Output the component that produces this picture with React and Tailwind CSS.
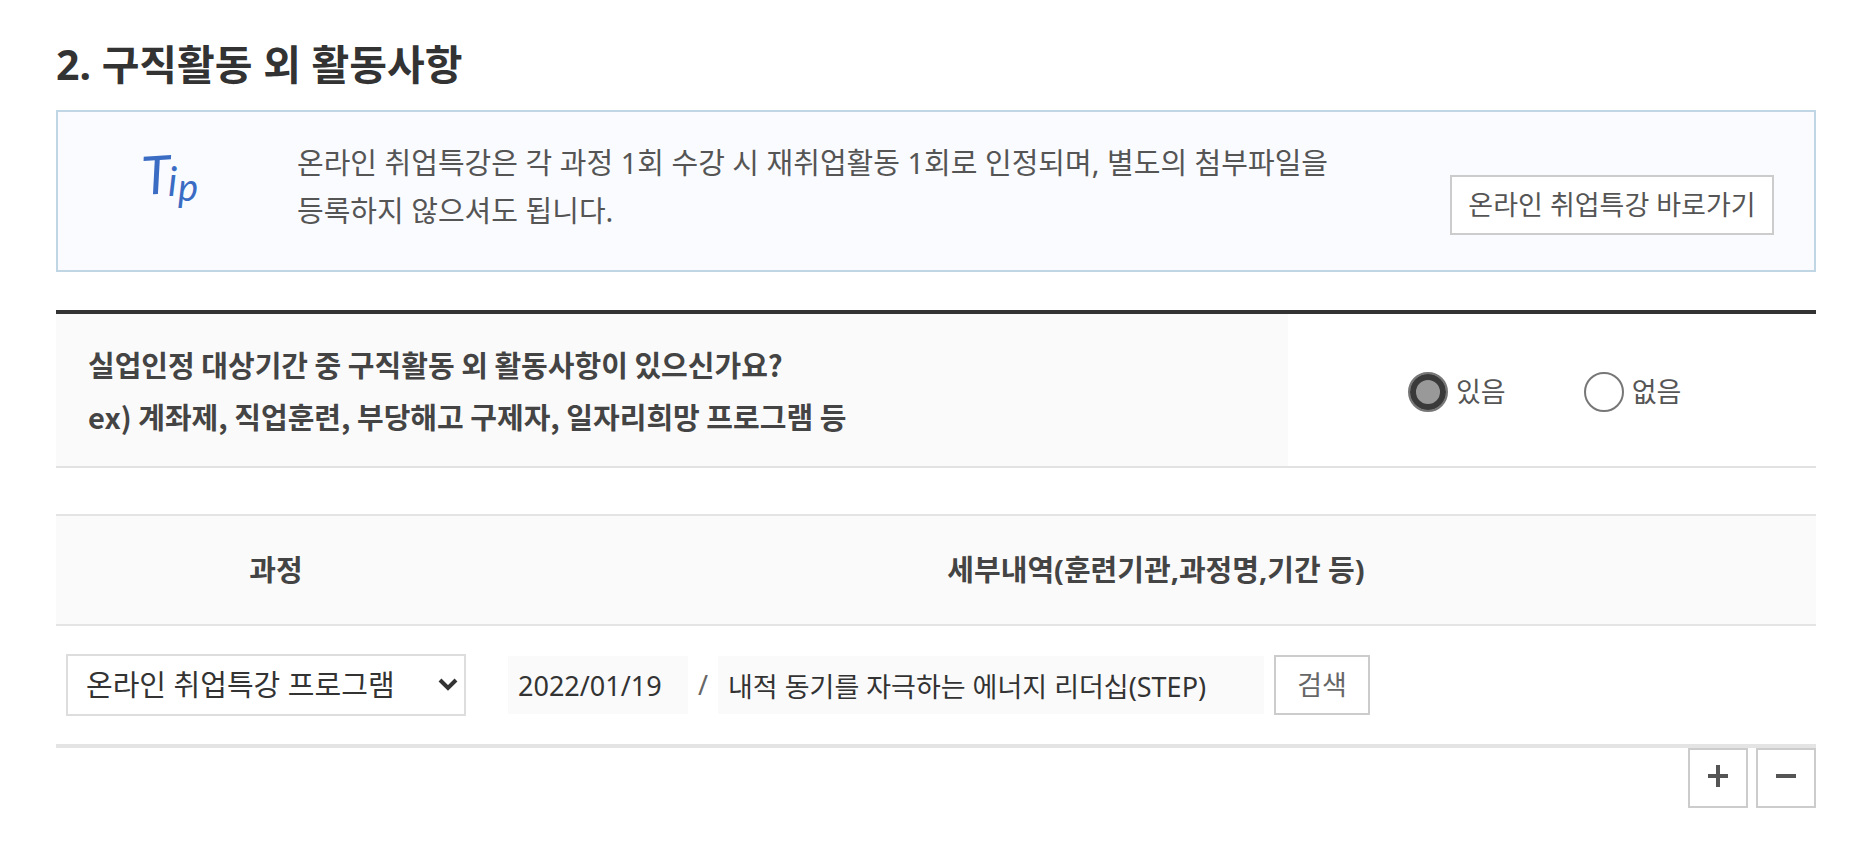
import React, { useState } from 'react';

const COURSES = ['온라인 취업특강 프로그램', '계좌제', '직업훈련', '일자리희망 프로그램'];

const ANSWERS = [
  { value: 'yes', label: '있음' },
  { value: 'no', label: '없음' }
];

/**
 * Handwritten style mark shown beside the notice
 */
const TipMark = () => (
  <svg
    width="80"
    height="80"
    viewBox="0 0 80 80"
    className="overflow-visible fill-[#3b6cc4] font-['Lato','Noto_Sans_CJK_KR',sans-serif] italic"
    role="img"
    aria-label="Tip"
  >
    <text x="13" y="56" fontSize="53" transform="rotate(-4 13 56)">T</text>
    <text x="38" y="57" fontSize="40">i</text>
    <text x="48" y="62" fontSize="38">p</text>
  </svg>
);

/**
 * Notice box with a shortcut to the online lectures
 */
const TipBox = () => (
  <div className="flex items-start border-2 border-[#c0d6e4] bg-[#fafbff] pt-[27px] pb-[35px] pr-10 pl-[72px]">
    <div className="w-[167px] shrink-0">
      <TipMark />
    </div>
    <p className="max-w-[1044px] flex-1 text-[29px] leading-[48px] text-[#555]">
      온라인 취업특강은 각 과정 1회 수강 시 재취업활동 1회로 인정되며, 별도의 첨부파일을 등록하지 않으셔도 됩니다.
    </p>
    <button
      type="button"
      className="ml-auto h-[60px] w-[324px] shrink-0 self-end border-2 border-[#ccc] bg-white text-[27px] whitespace-nowrap text-[#555]"
    >
      온라인 취업특강 바로가기
    </button>
  </div>
);

/**
 * Yes / no question about other activities
 */
const QuestionTable = ({ answer, onChange }) => (
  <table className="mt-[38px] w-full table-fixed border-separate border-spacing-0 border-t-4 border-[#333]">
    <tbody>
      <tr>
        <th
          id="question"
          scope="row"
          className="w-[70%] border-b-2 border-[#e2e2e2] bg-[#fafafa] px-8 py-6 text-left font-['Noto_Sans_CJK_KR',sans-serif] text-[29px] leading-[52px] font-bold text-[#444]"
        >
          실업인정 대상기간 중 구직활동 외 활동사항이 있으신가요?
          <br />
          ex) 계좌제, 직업훈련, 부당해고 구제자, 일자리희망 프로그램 등
        </th>
        <td className="border-b-2 border-[#e2e2e2] pt-1 pl-[120px]">
          <div role="radiogroup" aria-labelledby="question" className="flex gap-[78px]">
            {ANSWERS.map(({ value, label }) => (
              <label key={value} className="flex items-center gap-2 text-[27px] leading-10 text-[#555]">
                <input
                  type="radio"
                  name="activity"
                  value={value}
                  checked={answer === value}
                  onChange={() => onChange(value)}
                  className="size-10 appearance-none rounded-full border-2 border-[#777] bg-white checked:bg-[#999] checked:inset-ring-6 checked:inset-ring-[#3a3a3a]"
                />
                {label}
              </label>
            ))}
          </div>
        </td>
      </tr>
    </tbody>
  </table>
);

/**
 * Course rows: program, date and title
 */
const CourseTable = () => (
  <table className="mt-[46px] w-full table-fixed border-separate border-spacing-0 border-b-4 border-[#e4e4e4]">
    <thead>
      <tr className="h-28 bg-[#fafafa] text-[29px] text-[#444]">
        <th id="course" scope="col" className="w-1/4 border-y-2 border-[#e4e4e4] font-bold">
          과정
        </th>
        <th id="detail" scope="col" className="border-y-2 border-[#e4e4e4] font-bold">
          세부내역(훈련기관,과정명,기간 등)
        </th>
      </tr>
    </thead>
    <tbody>
      <tr className="h-[118px]">
        <td className="px-[10px]">
          <div className="relative w-[400px]">
            <select
              aria-labelledby="course"
              className="h-[62px] w-full appearance-none border-2 border-[#ddd] bg-white pl-[18px] text-[29px] text-[#333]"
            >
              {COURSES.map((course) => (
                <option key={course}>{course}</option>
              ))}
            </select>
            <svg
              width="20"
              height="14"
              viewBox="0 0 20 14"
              className="pointer-events-none absolute top-6 right-2 fill-none stroke-[#333] stroke-[4]"
            >
              <path d="M2 2 10 10 18 2" />
            </svg>
          </div>
        </td>
        <td className="px-3">
          <div className="flex items-center text-[27px] text-[#333]">
            <input
              type="text"
              aria-label="수강일"
              defaultValue="2022/01/19"
              readOnly
              className="h-[58px] w-[180px] bg-[#fafafa] px-[10px]"
            />
            <span className="w-[30px] text-center text-[#666]">/</span>
            <input
              type="text"
              aria-label="과정명"
              defaultValue="내적 동기를 자극하는 에너지 리더십(STEP)"
              readOnly
              className="h-[58px] w-[546px] bg-[#fafafa] px-[10px]"
            />
            <button
              type="button"
              className="ml-[10px] h-[60px] w-24 border-2 border-[#ccc] bg-white text-[#666]"
            >
              검색
            </button>
          </div>
        </td>
      </tr>
    </tbody>
  </table>
);

const SquareButton = ({ label, path }) => (
  <button
    type="button"
    aria-label={label}
    className="flex size-[60px] items-center justify-center border-2 border-[#ccc] bg-white pb-1"
  >
    <svg width="24" height="24" viewBox="0 0 24 24" className="fill-none stroke-[#555] stroke-[4]">
      <path d={path} />
    </svg>
  </button>
);

const App = () => {
  const [answer, setAnswer] = useState('yes');

  return (
    <main className="bg-white pt-[34px] pr-[58px] pb-9 pl-[56px] font-['Noto_Sans','Noto_Sans_CJK_KR',sans-serif]">
      <h2 className="mb-4 text-[41px] leading-[60px] font-bold text-[#333]">
        2. 구직활동 외 활동사항
      </h2>
      <TipBox />
      <QuestionTable answer={answer} onChange={setAnswer} />
      <CourseTable />
      <div className="flex justify-end gap-2">
        <SquareButton label="추가" path="M2 12H22M12 1V23" />
        <SquareButton label="삭제" path="M2 12H22" />
      </div>
    </main>
  );
};

export default App;
